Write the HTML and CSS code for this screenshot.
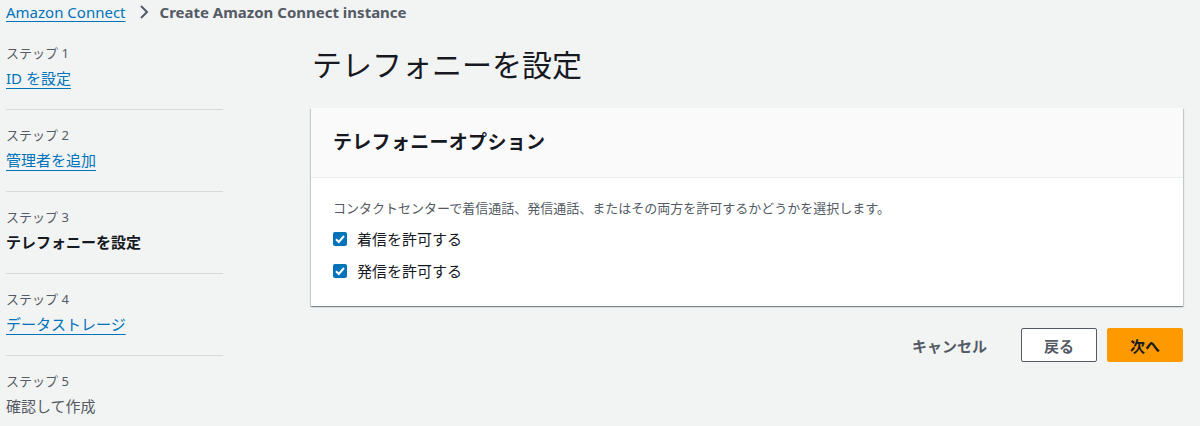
FILE: index.html
```html
<!DOCTYPE html>
<html lang="ja">
<head>
    <meta charset="UTF-8">
    <meta name="viewport" content="width=device-width, initial-scale=1.0">
    <title>Create Amazon Connect instance</title>
    <link rel="stylesheet" href="styles.css">
</head>
<body>

<div class="page">
    <nav class="breadcrumbs">
        <a href="#" class="crumb-link">Amazon Connect</a>
        <svg class="crumb-sep" width="12" height="16" viewBox="0 0 12 16">
            <polyline points="3,2 9,8 3,14" fill="none" stroke="#545b64" stroke-width="2"/>
        </svg>
        <span class="crumb-current">Create Amazon Connect instance</span>
    </nav>

    <div class="layout">
        <ul class="steps">
            <li class="step">
                <div class="step-label">ステップ 1</div>
                <a href="#" class="step-link">ID を設定</a>
            </li>
            <li class="step">
                <div class="step-label">ステップ 2</div>
                <a href="#" class="step-link">管理者を追加</a>
            </li>
            <li class="step">
                <div class="step-label">ステップ 3</div>
                <div class="step-title current">テレフォニーを設定</div>
            </li>
            <li class="step">
                <div class="step-label">ステップ 4</div>
                <a href="#" class="step-link">データストレージ</a>
            </li>
            <li class="step">
                <div class="step-label">ステップ 5</div>
                <div class="step-title disabled">確認して作成</div>
            </li>
        </ul>

        <main class="content">
            <h1 class="page-title">テレフォニーを設定</h1>

            <section class="panel">
                <div class="panel-header">
                    <h2>テレフォニーオプション</h2>
                </div>
                <div class="panel-body">
                    <p class="panel-desc">コンタクトセンターで着信通話、発信通話、またはその両方を許可するかどうかを選択します。</p>
                    <label class="check">
                        <svg class="check-box" width="14" height="14" viewBox="0 0 14 14">
                            <rect x="0" y="0" width="14" height="14" rx="2" fill="#0073bb"/>
                            <polyline points="3,7.2 5.8,10 11,4" fill="none" stroke="#fff" stroke-width="2"/>
                        </svg>
                        着信を許可する
                    </label>
                    <label class="check">
                        <svg class="check-box" width="14" height="14" viewBox="0 0 14 14">
                            <rect x="0" y="0" width="14" height="14" rx="2" fill="#0073bb"/>
                            <polyline points="3,7.2 5.8,10 11,4" fill="none" stroke="#fff" stroke-width="2"/>
                        </svg>
                        発信を許可する
                    </label>
                </div>
            </section>

            <div class="actions">
                <button class="btn btn-link">キャンセル</button>
                <button class="btn btn-normal">戻る</button>
                <button class="btn btn-primary">次へ</button>
            </div>
        </main>
    </div>
</div>

</body>
</html>
```

FILE: styles.css
```css
body {
    margin: 0;
    background-color: #f2f3f3;
    color: #16191f;
    font-family: "Noto Sans", "Noto Sans CJK JP", sans-serif;
}
.page {
    padding: 0 17px 0 6px;
}
.breadcrumbs {
    display: flex;
    align-items: center;
    height: 24px;
    font-size: 15px;
}
.crumb-link {
    color: #0073bb;
    text-decoration: underline;
    text-underline-offset: 3px;
}
.crumb-sep {
    margin: 0 10px 0 12px;
}
.crumb-current {
    color: #545b64;
    font-weight: bold;
}
.layout {
    display: flex;
    gap: 88px;
    padding-top: 4px;
}
.steps {
    list-style: none;
    margin: 0;
    padding: 0;
    width: 217px;
    flex-shrink: 0;
}
.step {
    padding: 15px 0 19px;
    border-bottom: 1px solid #d5dbdb;
}
.step:last-child {
    border-bottom: none;
}
.step-label {
    font-size: 13px;
    line-height: 20px;
    color: #545b64;
}
.step-link, .step-title {
    display: inline-block;
    margin-top: 3px;
    font-size: 15px;
    line-height: 24px;
}
.step-link {
    color: #0073bb;
    text-decoration: underline;
    text-underline-offset: 4px;
}
.step-title.current {
    font-weight: bold;
}
.step-title.disabled {
    color: #545b64;
}
.content {
    flex: 1;
}
.page-title {
    margin: 17px 0 23px 1px;
    font-size: 30px;
    font-weight: normal;
    line-height: 40px;
}
.panel {
    background-color: #fff;
    box-shadow: 0 1px 1px 0 rgba(0, 28, 36, 0.3), 1px 1px 1px 0 rgba(0, 28, 36, 0.15), -1px 1px 1px 0 rgba(0, 28, 36, 0.15);
}
.panel-header {
    background-color: #fafafa;
    border-bottom: 1px solid #eaeded;
    padding: 19px 22px 20px;
}
.panel-header h2 {
    margin: 0;
    font-size: 19px;
    line-height: 30px;
    font-weight: bold;
    letter-spacing: 0.3px;
}
.panel-body {
    padding: 20px 22px 20px;
}
.panel-desc {
    margin: 0 0 5px;
    font-size: 13px;
    line-height: 20px;
    color: #545b64;
}
.check {
    display: flex;
    align-items: center;
    height: 31px;
    font-size: 15px;
}
.check + .check {
    margin-top: 1px;
}
.check-box {
    margin-right: 10px;
}
.actions {
    display: flex;
    justify-content: flex-end;
    gap: 10px;
    margin-top: 22px;
}
.btn {
    height: 34px;
    padding: 0 20px;
    font-family: inherit;
    font-size: 15px;
    font-weight: bold;
    border-radius: 2px;
    cursor: pointer;
}
.btn-link {
    background: none;
    border: none;
    color: #545b64;
    margin-right: 4px;
}
.btn-normal {
    width: 76px;
    background-color: #fff;
    border: 1px solid #545b64;
    color: #545b64;
}
.btn-primary {
    width: 76px;
    background-color: #ff9900;
    border: 1px solid #ff9900;
    color: #16191f;
}
```
